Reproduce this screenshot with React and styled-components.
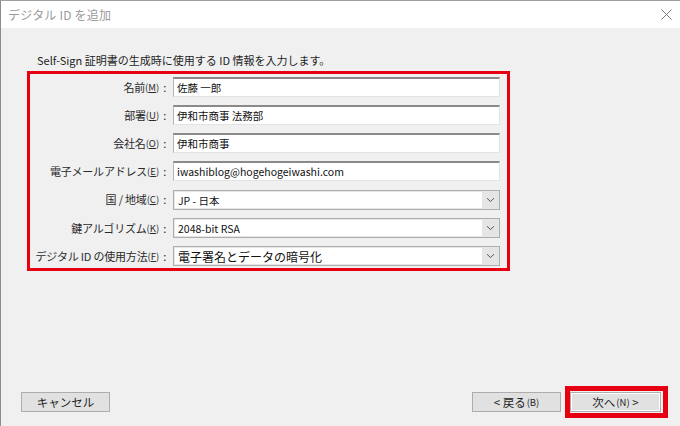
import React from "react";
import styled, { createGlobalStyle } from "styled-components";

const GlobalStyle = createGlobalStyle`
  html, body {
    margin: 0;
    padding: 0;
    background: #f0f0f0;
  }
  body {
    font-family: "Noto Sans CJK JP", "Noto Sans", sans-serif;
    color: #1e1e1e;
  }
`;

const Window = styled.div`
  width: 680px;
  height: 426px;
  box-sizing: border-box;
  border-top: 1px solid #a0a0a0;
  border-left: 1px solid #8c8c8c;
  background: #f0f0f0;
  display: flex;
  flex-direction: column;
  overflow: hidden;
`;

const TitleBar = styled.div`
  height: 27px;
  background: #ffffff;
  display: flex;
  align-items: center;
  justify-content: space-between;
  padding: 0 8px 0 7px;
`;

const Title = styled.span`
  font-size: 12px;
  color: #9a9a9a;
  letter-spacing: 0.2px;
`;

const Body = styled.div`
  flex: 1;
  display: flex;
  flex-direction: column;
  padding: 25px 0 0 26px;
`;

const Lead = styled.p`
  margin: 0 0 3px 10px;
  font-size: 11px;
  line-height: 15px;
  color: #1e1e1e;
`;

const Highlight = styled.div`
  width: 483px;
  box-sizing: border-box;
  border: 3px solid #e60012;
  padding: 3px 7px 2px 0;
  display: grid;
  grid-template-columns: 136px 327px;
  column-gap: 7px;
  row-gap: 8px;
`;

const Label = styled.label`
  height: 20px;
  display: flex;
  align-items: center;
  justify-content: flex-end;
  font-size: 11px;
  letter-spacing: -0.2px;
  color: #2a2a2a;
  white-space: nowrap;
`;

const Key = styled.span`
  font-size: 9.5px;
  letter-spacing: 0;
  u {
    text-decoration: underline;
    text-underline-offset: 1px;
  }
`;

const Colon = styled.span`
  margin-left: 4px;
`;

const TextBox = styled.div`
  height: 20px;
  box-sizing: border-box;
  background: #ffffff;
  border-style: solid;
  border-width: 2px 1px 1px 1px;
  border-color: #8a8a8a #e3e3e3 #e3e3e3 #b4b4b4;
  padding: 0 3px;
  display: flex;
  align-items: center;
  font-size: 10.5px;
  color: #111;
  white-space: nowrap;
`;

const Select = styled.div`
  height: 20px;
  box-sizing: border-box;
  border: 1px solid #adadad;
  background: #e5e5e5;
  padding: 1px 0 1px 1px;
  display: flex;
  margin-top: ${(p) => (p.$first ? "1px" : "0")};
`;

const SelectValue = styled.div`
  flex: 1;
  background: #ffffff;
  display: flex;
  align-items: center;
  padding: 0 3px;
  font-size: ${(p) => (p.$big ? "12px" : "10.5px")};
  color: #111;
  white-space: nowrap;
`;

const Arrow = styled.div`
  width: 17px;
  display: flex;
  align-items: center;
  justify-content: center;
`;

const Spacer = styled.div`
  flex: 1;
`;

const Footer = styled.div`
  display: flex;
  align-items: center;
  padding: 0 12px 9px 20px;
  height: 31px;
`;

const Button = styled.button`
  width: ${(p) => p.$w || 89}px;
  height: 20px;
  box-sizing: border-box;
  background: #e1e1e1;
  border: 1px solid #adadad;
  font-family: inherit;
  font-size: 11.5px;
  color: #1e1e1e;
  padding: 0;
  display: flex;
  align-items: center;
  justify-content: center;
  cursor: pointer;
  box-shadow: ${(p) => (p.$primary ? "inset 0 0 0 1px #ffffff" : "none")};
`;

const NextFrame = styled.div`
  margin-left: 4px;
  border: 5px solid #e60012;
  padding: 1px 2px 1px 0px;
  display: flex;
`;

const SmallKey = styled.span`
  font-size: 9.5px;
  margin-left: 1px;
`;

function Chevron() {
  return (
    <svg width="9" height="6" viewBox="0 0 9 6">
      <path d="M1 1.2 L4.5 4.6 L8 1.2" fill="none" stroke="#555" strokeWidth="1" />
    </svg>
  );
}

function CloseIcon() {
  return (
    <svg width="11" height="11" viewBox="0 0 11 11">
      <path d="M0.5 0.5 L10.5 10.5 M10.5 0.5 L0.5 10.5" stroke="#7a7a7a" strokeWidth="1" />
    </svg>
  );
}

const textFields = [
  { label: "名前", key: "M", value: "佐藤 一郎" },
  { label: "部署", key: "U", value: "伊和市商事 法務部" },
  { label: "会社名", key: "O", value: "伊和市商事" },
  { label: "電子メールアドレス", key: "E", value: "iwashiblog@hogehogeiwashi.com" },
];

const selectFields = [
  { label: "国 / 地域", key: "C", value: "JP - 日本" },
  { label: "鍵アルゴリズム", key: "K", value: "2048-bit RSA" },
  { label: "デジタル ID の使用方法", key: "F", value: "電子署名とデータの暗号化", big: true },
];

function FieldLabel({ label, k }) {
  return (
    <Label>
      {label}
      <Key>
        (<u>{k}</u>)
      </Key>
      <Colon>:</Colon>
    </Label>
  );
}

export default function App() {
  return (
    <>
      <GlobalStyle />
      <Window>
        <TitleBar>
          <Title>デジタル ID を追加</Title>
          <CloseIcon />
        </TitleBar>
        <Body>
          <Lead>Self-Sign 証明書の生成時に使用する ID 情報を入力します。</Lead>
          <Highlight>
            {textFields.map((f) => (
              <React.Fragment key={f.key}>
                <FieldLabel label={f.label} k={f.key} />
                <TextBox>{f.value}</TextBox>
              </React.Fragment>
            ))}
            {selectFields.map((f, i) => (
              <React.Fragment key={f.key}>
                <FieldLabel label={f.label} k={f.key} />
                <Select $first={i === 0}>
                  <SelectValue $big={f.big}>{f.value}</SelectValue>
                  <Arrow>
                    <Chevron />
                  </Arrow>
                </Select>
              </React.Fragment>
            ))}
          </Highlight>
          <Spacer />
        </Body>
        <Footer>
          <Button>キャンセル</Button>
          <Spacer />
          <Button>
            &lt; 戻る<SmallKey>(B)</SmallKey>
          </Button>
          <NextFrame>
            <Button $primary $w={91}>
              次へ<SmallKey>(N)</SmallKey>&nbsp;&gt;
            </Button>
          </NextFrame>
        </Footer>
      </Window>
    </>
  );
}
